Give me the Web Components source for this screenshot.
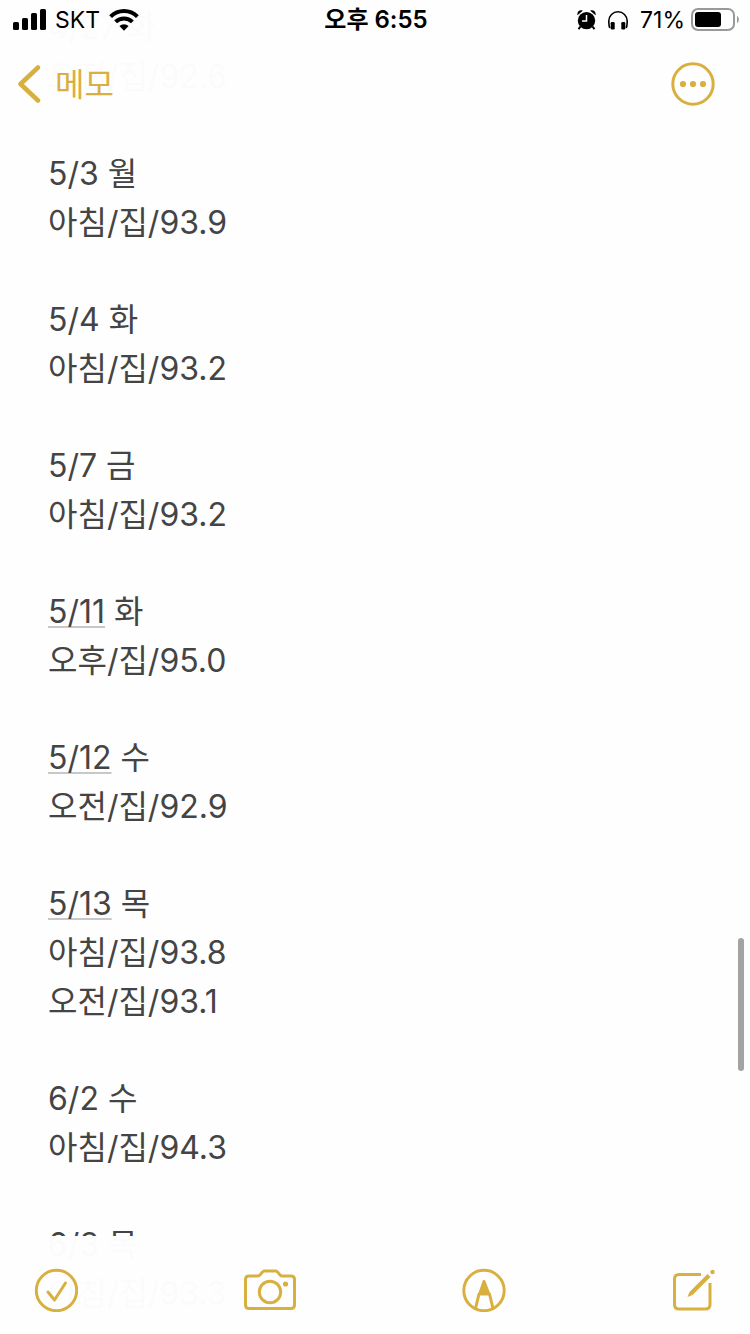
<!DOCTYPE html>
<html lang="ko">
<head>
<meta charset="utf-8">
<meta name="viewport" content="width=device-width, initial-scale=1">
<title>메모</title>
<style>
  body {
    margin: 0;
    background: #fefefe;
    font-family: Inter, "Noto Sans CJK KR", sans-serif;
  }
</style>
</head>
<body>
<memo-app></memo-app>

<script>
class StatusBar extends HTMLElement {
  constructor() {
    super();
    this.shadowDOM = this.attachShadow({ mode: "open" });
  }

  connectedCallback() {
    this.shadowDOM.innerHTML = `
      <style>
        :host {
          display: grid;
          grid-template-columns: 1fr auto 1fr;
          align-items: center;
          height: 40px;
          padding: 0 11px 0 13px;
          color: #000;
          font-size: 23px;
          line-height: 40px;
        }
        .side {
          display: flex;
          align-items: center;
          gap: 9px;
        }
        .right {
          justify-content: flex-end;
          gap: 8px;
        }
        .time {
          font-size: 24px;
          font-weight: 600;
        }
        .alarm {
          margin-right: 4px;
        }
        .level {
          margin-left: 4px;
          margin-right: -2px;
        }
        svg {
          display: block;
          flex: none;
        }
      </style>
      <div class="side">
        <svg width="33" height="22" viewBox="0 0 33 22" aria-hidden="true">
          <rect x="0" y="13" width="6" height="8" rx="1.5"/>
          <rect x="9" y="9" width="6" height="12" rx="1.5"/>
          <rect x="18" y="4" width="6" height="17" rx="1.5"/>
          <rect x="27" y="0" width="6" height="21" rx="1.5"/>
        </svg>
        <span>SKT</span>
        <svg width="30" height="22" viewBox="0 0 30 22" aria-hidden="true">
          <g fill="none" stroke="#000" stroke-width="4">
            <path d="M1.6 7.6a19 19 0 0 1 26.8 0"/>
            <path d="M6.6 12.9a12 12 0 0 1 16.8 0"/>
          </g>
          <path d="M10.4 17.1a6.5 6.5 0 0 1 9.2 0L15 21.7z"/>
        </svg>
      </div>
      <span class="time">${this.getAttribute("time")}</span>
      <div class="side right">
        <svg class="alarm" width="19" height="20" viewBox="0 0 19 20" aria-hidden="true">
          <circle cx="9.5" cy="10.6" r="8.7"/>
          <path d="M.4 5.3C-.3 1.6 2.9-.8 5.8.7zM18.6 5.3C19.3 1.6 16.1-.8 13.2.7z"/>
          <path d="M3.5 16.5l-2 2.7M15.5 16.5l2 2.7" stroke="#000" stroke-width="2"/>
          <path d="M9.5 5v6H5" fill="none" stroke="#fff" stroke-width="1.5"/>
        </svg>
        <svg width="20" height="19" viewBox="0 0 20 19" aria-hidden="true">
          <path d="M1.8 17C.7 14.5.8 12.5.8 10a9.2 9.2 0 0 1 18.4 0c0 2.5.1 4.5-1 7" fill="none" stroke="#000" stroke-width="1.6"/>
          <rect x="2.7" y="11" width="4" height="7.5" rx="1.3"/>
          <rect x="13.3" y="11" width="4" height="7.5" rx="1.3"/>
        </svg>
        <span class="level">${this.getAttribute("battery")}</span>
        <svg width="48" height="24" viewBox="0 0 48 24" aria-hidden="true">
          <rect x="1" y="1" width="42" height="21" rx="6" fill="none" stroke="#999" stroke-width="2"/>
          <rect x="4" y="4" width="26" height="15" rx="3"/>
          <path d="M46 8c2.5 1 2.5 6 0 7z" fill="#999"/>
        </svg>
      </div>
    `;
  }
}

class MemoNav extends HTMLElement {
  constructor() {
    super();
    this.shadowDOM = this.attachShadow({ mode: "open" });
  }

  connectedCallback() {
    this.shadowDOM.innerHTML = `
      <style>
        :host {
          display: flex;
          align-items: center;
          justify-content: space-between;
          height: 88px;
          padding: 0 35px 0 17px;
          color: #d8b040;
        }
        a {
          display: flex;
          align-items: center;
          gap: 14px;
          color: inherit;
          text-decoration: none;
          font-size: 32px;
          line-height: 49px;
        }
        button {
          padding: 0;
          border: 0;
          background: none;
          color: inherit;
        }
        svg {
          display: block;
          fill: none;
          stroke: currentColor;
        }
      </style>
      <a href="#">
        <svg width="24" height="38" viewBox="0 0 24 38" stroke-width="4.5" stroke-linecap="round" stroke-linejoin="round" aria-hidden="true">
          <path d="M21 2.5 3.5 19 21 35.5"/>
        </svg>
        <slot></slot>
      </a>
      <button type="button" aria-label="더 보기">
        <svg width="44" height="44" viewBox="0 0 44 44" stroke-width="3">
          <circle cx="22" cy="22" r="20.2"/>
          <g fill="currentColor" stroke="none">
            <circle cx="12" cy="22" r="3.1"/>
            <circle cx="22" cy="22" r="3.1"/>
            <circle cx="32" cy="22" r="3.1"/>
          </g>
        </svg>
      </button>
    `;
  }
}

class MemoEntry extends HTMLElement {
  constructor() {
    super();
    this.shadowDOM = this.attachShadow({ mode: "open" });
  }

  set entry(entry) {
    this._entry = entry;
    this.render();
  }

  render() {
    const { date, day, lines, detected } = this._entry;
    this.shadowDOM.innerHTML = `
      <style>
        :host {
          display: block;
          color: #444;
          font-size: 32px;
          line-height: 49px;
        }
        p {
          margin: 0;
        }
        a {
          color: inherit;
          text-decoration: underline;
          text-decoration-color: #c8c8c8;
          text-decoration-thickness: 2px;
          text-underline-offset: 3px;
        }
      </style>
      <p>${detected ? `<a href="#">${date}</a>` : date} ${day}</p>
      ${lines.map((line) => `<p>${line}</p>`).join("")}
    `;
  }
}

class MemoToolbar extends HTMLElement {
  constructor() {
    super();
    this.shadowDOM = this.attachShadow({ mode: "open" });
  }

  connectedCallback() {
    this.shadowDOM.innerHTML = `
      <style>
        :host {
          display: flex;
          align-items: center;
          justify-content: space-between;
          box-sizing: border-box;
          height: 98px;
          padding: 10px 34px 0;
          color: #d8b040;
        }
        button {
          padding: 0;
          border: 0;
          background: none;
          color: inherit;
        }
        svg {
          display: block;
          fill: none;
          stroke: currentColor;
          stroke-width: 3;
          stroke-linecap: round;
          stroke-linejoin: round;
        }
      </style>
      <button type="button" aria-label="체크리스트">
        <svg width="44" height="44" viewBox="0 0 44 44">
          <circle cx="22.5" cy="22.5" r="20.2"/>
          <path d="M14 24l6.500 8L31.500 15"/>
        </svg>
      </button>
      <button type="button" aria-label="카메라">
        <svg width="52" height="44" viewBox="0 0 52 44">
          <path d="M5 8h9c2.5 0 4-5 6-5h12c2 0 3.5 5 6 5h9q3.5 0 3.5 3.5v25.5q0 3.5-3.5 3.5H5q-3.500 0-3.500-3.500V11.5Q1.5 8 5 8z"/>
          <circle cx="26" cy="24" r="10.7"/>
          <circle cx="41.5" cy="16" r="2.6" fill="currentColor" stroke="none"/>
        </svg>
      </button>
      <button type="button" aria-label="마크업">
        <svg width="44" height="44" viewBox="0 0 44 44">
          <circle cx="22" cy="22.5" r="20.2"/>
          <path d="M13.500 40.500 17 26h10.500L31 40.500"/>
          <path d="M22 13.500 18 25h8.500z" fill="currentColor"/>
        </svg>
      </button>
      <button type="button" aria-label="새로운 메모">
        <svg width="44" height="44" viewBox="0 0 44 44">
          <path d="M29 6.500H7q-4.500 0-4.500 4.500v25.500q0 4.500 4.500 4.500h26.500q4.500 0 4.500-4.500V15" stroke-linecap="butt"/>
          <path d="M15.500 29 17.500 24 35.500 6l3 3-18 18z" fill="currentColor" stroke="none"/>
          <circle cx="40.5" cy="4" r="2.2" fill="currentColor" stroke="none"/>
        </svg>
      </button>
    `;
  }
}

class MemoApp extends HTMLElement {
  constructor() {
    super();
    this.shadowDOM = this.attachShadow({ mode: "open" });
  }

  connectedCallback() {
    this.shadowDOM.innerHTML = `
      <style>
        :host {
          display: grid;
          grid-template-columns: minmax(0, 1fr);
          grid-template-rows: auto 1fr auto;
          position: relative;
          height: 100vh;
          overflow: hidden;
        }
        main {
          grid-row: 1 / -1;
          grid-column: 1;
          display: flex;
          flex-direction: column;
          gap: 48px;
          min-height: 0;
          padding: 3px 48px 0;
          overflow: hidden;
        }
        header, footer {
          grid-column: 1;
          z-index: 1;
          background: rgba(254, 254, 254, 0.985);
        }
        header {
          grid-row: 1;
        }
        footer {
          grid-row: 3;
        }
        memo-entry {
          flex: none;
        }
        /* scroll thumb floats over the memo */
        .thumb {
          position: absolute;
          right: 6px;
          top: 70.3%;
          width: 6px;
          height: 10%;
          border-radius: 3px;
          background: #a3a3a3;
        }
      </style>
      <header>
        <status-bar time="오후 6:55" battery="71%"></status-bar>
        <memo-nav>메모</memo-nav>
      </header>
      <main></main>
      <footer><memo-toolbar></memo-toolbar></footer>
      <div class="thumb"></div>
    `;

    const main = this.shadowDOM.querySelector("main");
    entries.forEach((entry) => {
      const item = document.createElement("memo-entry");
      item.entry = entry;
      main.appendChild(item);
    });
  }
}

const entries = [
  { date: "4/27", day: "화", lines: ["오전/집/92.6"] },
  { date: "5/3", day: "월", lines: ["아침/집/93.9"] },
  { date: "5/4", day: "화", lines: ["아침/집/93.2"] },
  { date: "5/7", day: "금", lines: ["아침/집/93.2"] },
  { date: "5/11", day: "화", lines: ["오후/집/95.0"], detected: true },
  { date: "5/12", day: "수", lines: ["오전/집/92.9"], detected: true },
  { date: "5/13", day: "목", lines: ["아침/집/93.8", "오전/집/93.1"], detected: true },
  { date: "6/2", day: "수", lines: ["아침/집/94.3"] },
  { date: "6/3", day: "목", lines: ["아침/집/93.3"] },
];

customElements.define("status-bar", StatusBar);
customElements.define("memo-nav", MemoNav);
customElements.define("memo-entry", MemoEntry);
customElements.define("memo-toolbar", MemoToolbar);
customElements.define("memo-app", MemoApp);
</script>
</body>
</html>
